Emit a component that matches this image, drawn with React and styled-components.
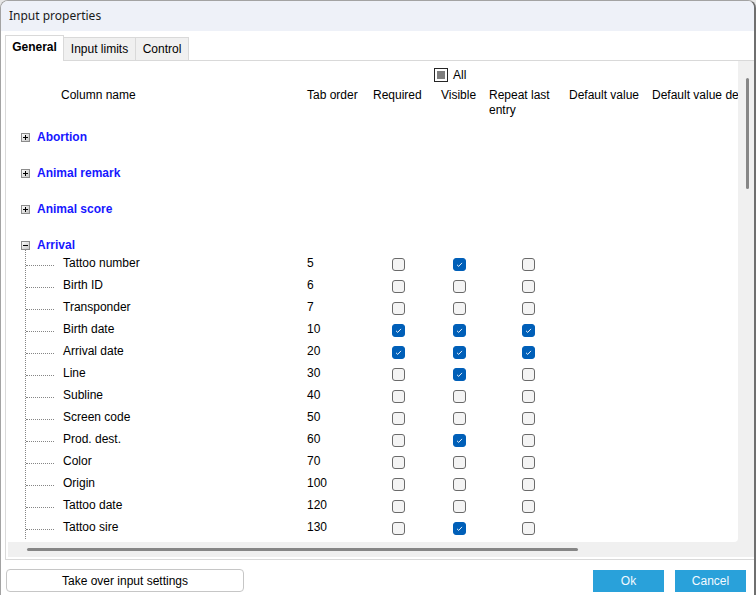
import React from 'react'
import styled, { createGlobalStyle } from 'styled-components'

const GlobalStyle = createGlobalStyle`
  html, body { margin: 0; padding: 0; background: #e6e6e6; }
  body {
    font-family: "Liberation Sans", Arial, sans-serif;
    font-size: 12px;
    color: #000;
  }
  * { box-sizing: border-box; }
`

const COLS = {
  name: 299,
  tab: 66,
  req: 68,
  vis: 48,
  rep: 80,
  def: 83,
  desc: 220,
}

const collapsedGroups = ['Abortion', 'Animal remark', 'Animal score']

const arrivalRows = [
  { name: 'Tattoo number', tab: 5, req: false, vis: true, rep: false },
  { name: 'Birth ID', tab: 6, req: false, vis: false, rep: false },
  { name: 'Transponder', tab: 7, req: false, vis: false, rep: false },
  { name: 'Birth date', tab: 10, req: true, vis: true, rep: true },
  { name: 'Arrival date', tab: 20, req: true, vis: true, rep: true },
  { name: 'Line', tab: 30, req: false, vis: true, rep: false },
  { name: 'Subline', tab: 40, req: false, vis: false, rep: false },
  { name: 'Screen code', tab: 50, req: false, vis: false, rep: false },
  { name: 'Prod. dest.', tab: 60, req: false, vis: true, rep: false },
  { name: 'Color', tab: 70, req: false, vis: false, rep: false },
  { name: 'Origin', tab: 100, req: false, vis: false, rep: false },
  { name: 'Tattoo date', tab: 120, req: false, vis: false, rep: false },
  { name: 'Tattoo sire', tab: 130, req: false, vis: true, rep: false },
]

// tree indent: vertical line (17 + 1) + branch (28) + gap (9)
const TREE_INDENT = 55

function Expander({ open }) {
  return (
    <svg width="9" height="9" viewBox="0 0 9 9">
      <defs>
        <linearGradient id="expgrad" x1="0" y1="0" x2="1" y2="1">
          <stop offset="0" stopColor="#ffffff" />
          <stop offset="1" stopColor="#c4c4c4" />
        </linearGradient>
      </defs>
      <rect x="0.5" y="0.5" width="8" height="8" fill="url(#expgrad)" stroke="#8c8c8c" />
      <path d="M2 4.5H7" stroke="#000" />
      {!open && <path d="M4.5 2V7" stroke="#000" />}
    </svg>
  )
}

function CheckBox({ on }) {
  return (
    <Check $on={on}>
      {on && (
        <svg width="9" height="9" viewBox="0 0 9 9">
          <path d="M2 4.8 L3.7 6.4 L7 2.9" fill="none" stroke="#fff" strokeWidth="0.9" />
        </svg>
      )}
    </Check>
  )
}

export default function App() {
  return (
    <>
      <GlobalStyle />
      <Window>
        <TitleBar>Input properties</TitleBar>

        <TabStrip>
          <Tab $active $w={59}>General</Tab>
          <Tab $w={72}>Input limits</Tab>
          <Tab $w={53}>Control</Tab>
        </TabStrip>

        <Panel>
          <ScrollFrame>
            <Content>
              <AllRow>
                <Indeterminate><span /></Indeterminate>
                All
              </AllRow>
              <HeaderRow>
                <Cell $w={COLS.name} $pad={53}>Column name</Cell>
                <Cell $w={COLS.tab}>Tab order</Cell>
                <Cell $w={COLS.req}>Required</Cell>
                <Cell $w={COLS.vis}>Visible</Cell>
                <Cell $w={COLS.rep}>Repeat last entry</Cell>
                <Cell $w={COLS.def}>Default value</Cell>
                <Cell $w={COLS.desc} $nowrap>Default value description</Cell>
              </HeaderRow>

              {collapsedGroups.map((g) => (
                <Group key={g}>
                  <GroupHead>
                    <Expander />
                    {g}
                  </GroupHead>
                </Group>
              ))}

              <Group>
                <GroupHead>
                  <Expander open />
                  Arrival
                </GroupHead>
                <Children>
                  {arrivalRows.map((r) => (
                    <DataRow key={r.name}>
                      <Branch />
                      <Cell $w={COLS.name - TREE_INDENT} $text>{r.name}</Cell>
                      <Cell $w={COLS.tab} $text>{r.tab}</Cell>
                      <Cell $w={COLS.req} $pad={19}><CheckBox on={r.req} /></Cell>
                      <Cell $w={COLS.vis} $pad={12}><CheckBox on={r.vis} /></Cell>
                      <Cell $w={COLS.rep} $pad={33}><CheckBox on={r.rep} /></Cell>
                    </DataRow>
                  ))}
                </Children>
              </Group>
            </Content>
            <VTrack>
              <VThumb />
            </VTrack>
            <HTrack>
              <HThumb />
            </HTrack>
            <Corner />
          </ScrollFrame>
        </Panel>

        <Footer>
          <PlainButton>Take over input settings</PlainButton>
          <ButtonGroup>
            <PrimaryButton>Ok</PrimaryButton>
            <PrimaryButton>Cancel</PrimaryButton>
          </ButtonGroup>
        </Footer>
      </Window>
    </>
  )
}

const Window = styled.div`
  height: 100vh;
  display: flex;
  flex-direction: column;
  background: #fff;
  border: 1px solid #a3a3a3;
  border-right: 2px solid #6f6f6f;
  border-bottom: none;
  border-radius: 8px 8px 0 0;
  overflow: hidden;
`

const TitleBar = styled.div`
  height: 30px;
  flex: none;
  line-height: 30px;
  padding-left: 8px;
  background: #eef1f8;
  font-family: "Noto Sans", "Open Sans", sans-serif;
  font-size: 12px;
  color: #1a1a1a;
`

const TabStrip = styled.div`
  flex: none;
  height: 25px;
  margin-top: 4px;
  padding-left: 4px;
  display: flex;
  align-items: flex-end;
  position: relative;
  z-index: 1;
`

const Tab = styled.div`
  width: ${(p) => p.$w}px;
  height: ${(p) => (p.$active ? 26 : 23)}px;
  margin-bottom: ${(p) => (p.$active ? -1 : 0)}px;
  line-height: 22px;
  text-align: center;
  background: ${(p) => (p.$active ? '#fff' : '#f0f0f0')};
  border: 1px solid #d9d9d9;
  border-bottom: none;
  border-left: ${(p) => (p.$active ? '1px solid #d9d9d9' : 'none')};
  font-weight: ${(p) => (p.$active ? 700 : 400)};
`

const Panel = styled.div`
  flex: 1;
  min-height: 0;
  margin-left: 4px;
  padding: 0 0 2px 2px;
  border: 1px solid #d9d9d9;
  border-right: none;
  background: #fff;
  display: flex;
`

const ScrollFrame = styled.div`
  flex: 1;
  display: grid;
  grid-template-columns: 1fr 16px;
  grid-template-rows: 1fr 15px;
  background: #f0f0f0;
`

const Content = styled.div`
  background: #fff;
  overflow: hidden;
  border-bottom-right-radius: 4px;
  min-width: 0;
  min-height: 0;
`

const AllRow = styled.div`
  margin-top: 7px;
  height: 13px;
  display: flex;
  align-items: center;
  gap: 5px;
  padding-left: 426px;
`

const Indeterminate = styled.span`
  width: 14px;
  height: 14px;
  border: 1px solid #262626;
  padding: 2px;
  background: #fff;
  display: inline-flex;

  span {
    flex: 1;
    background: #7f7f7f;
  }
`

const HeaderRow = styled.div`
  margin-top: 7px;
  height: 30px;
  display: flex;
  align-items: flex-start;
  line-height: 15px;
`

const Cell = styled.div`
  flex: none;
  width: ${(p) => p.$w}px;
  padding-left: ${(p) => p.$pad || 0}px;
  padding-bottom: ${(p) => (p.$text ? 2 : 0)}px;
  white-space: ${(p) => (p.$nowrap ? 'nowrap' : 'normal')};
  display: ${(p) => (p.$pad && !p.$text ? 'flex' : 'block')};
`

const Group = styled.div`
  padding-top: 10px;
  padding-bottom: 8px;

  &:last-child {
    padding-bottom: 0;
  }
`

const GroupHead = styled.div`
  height: 18px;
  display: flex;
  align-items: center;
  gap: 7px;
  padding-left: 13px;
  font-weight: 700;
  color: #1717ff;
`

const Children = styled.div`
  margin-left: 17px;
  margin-top: -5px;
  padding-top: 4px;
  border-left: 1px dotted #858585;
`

const DataRow = styled.div`
  height: 22px;
  display: flex;
  align-items: center;
`

const Branch = styled.span`
  flex: none;
  width: 28px;
  margin-right: 9px;
  margin-top: 3px;
  border-top: 1px dotted #858585;
`

const Check = styled.span`
  width: 13px;
  height: 13px;
  border-radius: 3px;
  display: inline-flex;
  align-items: center;
  justify-content: center;
  border: 1px solid ${(p) => (p.$on ? '#005fb8' : '#6a6a6a')};
  background: ${(p) => (p.$on ? '#005fb8' : '#f4f4f4')};
`

const VTrack = styled.div`
  background: #f0f0f0;
`

const VThumb = styled.div`
  margin: 17px 0 0 8px;
  width: 3px;
  height: 111px;
  border-radius: 2px;
  background: #868686;
`

const HTrack = styled.div`
  background: #f0f0f0;
  padding-top: 6px;
`

const HThumb = styled.div`
  margin-left: 19px;
  width: 551px;
  height: 3px;
  border-radius: 2px;
  background: #868686;
`

const Corner = styled.div`
  background: #f0f0f0;
`

const Footer = styled.div`
  flex: none;
  height: 35px;
  padding: 9px 8px 0 5px;
  display: flex;
  justify-content: space-between;
  align-items: flex-start;
  background: #fff;
`

const PlainButton = styled.button`
  width: 238px;
  height: 23px;
  border: 1px solid #c6c6c6;
  border-radius: 4px;
  background: #fff;
  font-family: "Liberation Sans", Arial, sans-serif;
  font-size: 12px;
  color: #000;
  padding: 0;
`

const ButtonGroup = styled.div`
  display: flex;
  gap: 11px;
  padding-top: 1px;
`

const PrimaryButton = styled.button`
  width: 71px;
  height: 22px;
  border: none;
  background: #29a1da;
  font-family: "Liberation Sans", Arial, sans-serif;
  font-size: 12px;
  color: #f4faff;
  padding: 0;
`
